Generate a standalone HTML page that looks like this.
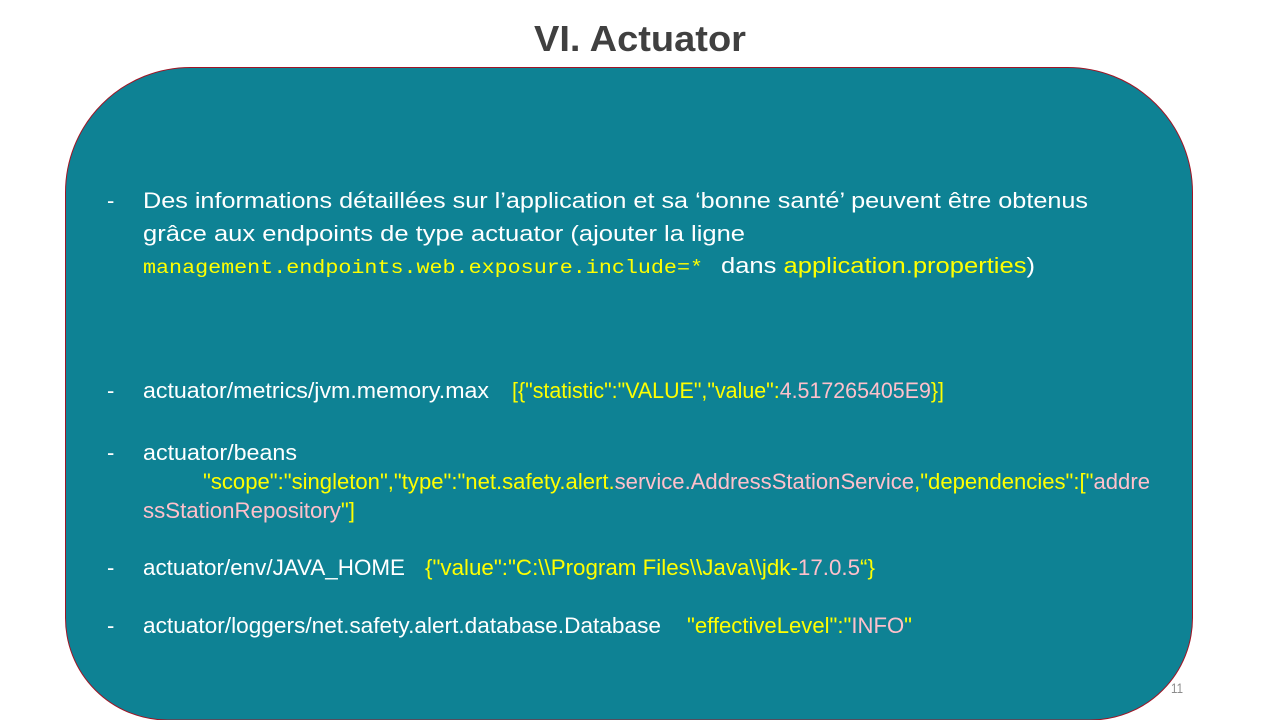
<!DOCTYPE html>
<html><head><meta charset="utf-8"><style>
html,body{margin:0;padding:0;background:#fff;width:1280px;height:720px;overflow:hidden}
</style></head><body>
<svg width="1280" height="720" xmlns="http://www.w3.org/2000/svg" style="display:block">
<path d="M190.5 67.5 H1067.5 A125 125 0 0 1 1192.5 192.5 V618 A102 102 0 0 1 1090.5 720 H167.5 A102 102 0 0 1 65.5 618 V192.5 A125 125 0 0 1 190.5 67.5 Z" fill="#0E8294" stroke="#A01525" stroke-width="1"/>
<text x="640" y="51" text-anchor="middle" font-family="Liberation Sans, sans-serif" font-weight="bold" font-size="36" fill="#404040" textLength="212" lengthAdjust="spacingAndGlyphs">VI. Actuator</text>
<g font-family="Liberation Sans, sans-serif" font-size="22" fill="#fff">
<text x="107" y="208">-</text>
<text x="143" y="208" textLength="945" lengthAdjust="spacingAndGlyphs">Des informations détaillées sur l’application et sa ‘bonne santé’ peuvent être obtenus</text>
<text x="143" y="241" textLength="602" lengthAdjust="spacingAndGlyphs">grâce aux endpoints de type actuator (ajouter la ligne</text>
<text x="143" y="273" font-family="Liberation Mono, monospace" font-size="19" fill="#FFFF00" textLength="560" lengthAdjust="spacingAndGlyphs">management.endpoints.web.exposure.include=*</text>
<text x="721" y="273" textLength="314" lengthAdjust="spacingAndGlyphs">dans <tspan fill="#FFFF00">application.properties</tspan>)</text>

<text x="107" y="398">-</text>
<text x="143" y="398" textLength="346" lengthAdjust="spacingAndGlyphs">actuator/metrics/jvm.memory.max</text>
<text x="512" y="398" fill="#FFFF00" textLength="432" lengthAdjust="spacingAndGlyphs">[{"statistic":"VALUE","value":<tspan fill="#FFC0CB">4.517265405E9</tspan>}]</text>

<text x="107" y="460">-</text>
<text x="143" y="460" textLength="154" lengthAdjust="spacingAndGlyphs">actuator/beans</text>
<text x="203" y="489" fill="#FFFF00" textLength="947" lengthAdjust="spacingAndGlyphs">"scope":"singleton","type":"net.safety.alert.<tspan fill="#FFC0CB">service.AddressStationService</tspan>,"dependencies":["<tspan fill="#FFC0CB">addre</tspan></text>
<text x="143" y="518" fill="#FFC0CB" textLength="212" lengthAdjust="spacingAndGlyphs">ssStationRepository<tspan fill="#FFFF00">"]</tspan></text>

<text x="107" y="575">-</text>
<text x="143" y="575" textLength="262" lengthAdjust="spacingAndGlyphs">actuator/env/JAVA_HOME</text>
<text x="425" y="575" fill="#FFFF00" textLength="450" lengthAdjust="spacingAndGlyphs">{"value":"C:\\Program Files\\Java\\jdk-<tspan fill="#FFC0CB">17.0.5</tspan>“}</text>

<text x="107" y="633">-</text>
<text x="143" y="633" textLength="518" lengthAdjust="spacingAndGlyphs">actuator/loggers/net.safety.alert.database.Database</text>
<text x="687" y="633" fill="#FFFF00" textLength="225" lengthAdjust="spacingAndGlyphs">"effectiveLevel":"<tspan fill="#FFC0CB">INFO</tspan>"</text>
</g>
<text x="1171" y="693" font-family="Liberation Sans, sans-serif" font-size="14" fill="#8c8c8c" textLength="12" lengthAdjust="spacingAndGlyphs">11</text>
</svg>
</body></html>
